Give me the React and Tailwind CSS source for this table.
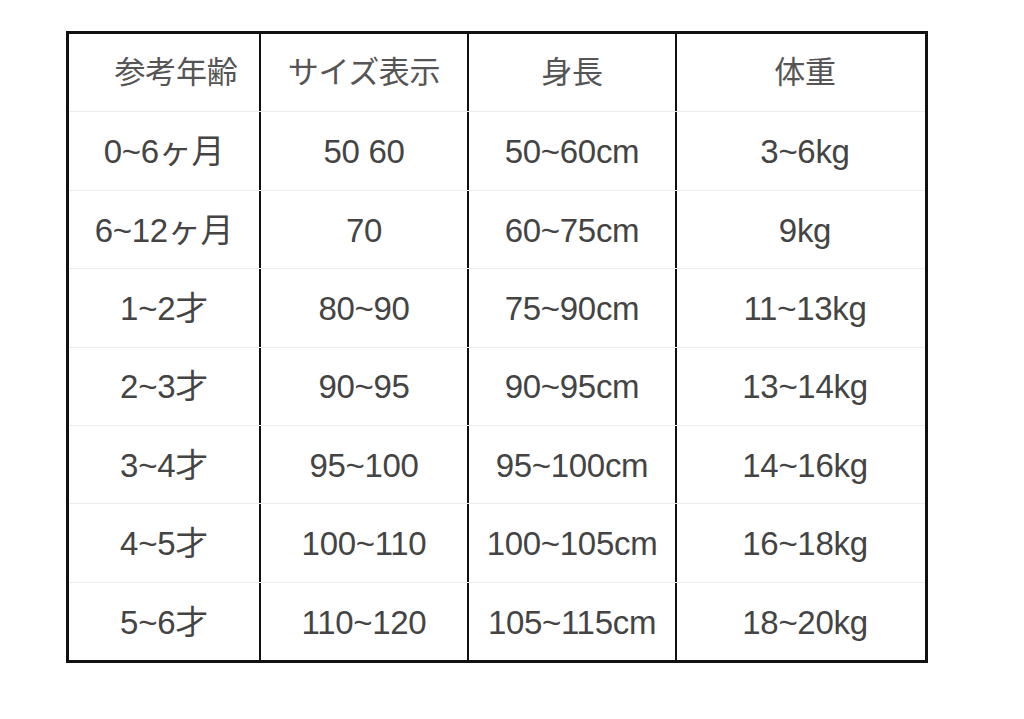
const rows = [
  ["0~6ヶ月", "50 60", "50~60cm", "3~6kg"],
  ["6~12ヶ月", "70", "60~75cm", "9kg"],
  ["1~2才", "80~90", "75~90cm", "11~13kg"],
  ["2~3才", "90~95", "90~95cm", "13~14kg"],
  ["3~4才", "95~100", "95~100cm", "14~16kg"],
  ["4~5才", "100~110", "100~105cm", "16~18kg"],
  ["5~6才", "110~120", "105~115cm", "18~20kg"],
];

const Row = ({ cells, header, first }) => (
  <div
    className={`flex flex-1 ${first ? "" : "border-t border-[#ebebeb]"} ${
      header ? "text-[#555] text-[31px]" : "text-[#444] text-[33px]"
    }`}
  >
    <div className={`w-[190px] pt-[2px] flex items-center justify-center ${header ? "pl-6" : ""}`}>
      {cells[0]}
    </div>
    <div className="w-[208px] pt-[2px] border-l-2 border-[#111] flex items-center justify-center">
      {cells[1]}
    </div>
    <div className="w-[208px] pt-[2px] border-l-2 border-[#111] flex items-center justify-center">
      {cells[2]}
    </div>
    <div className="w-[250px] pt-[2px] border-l-2 border-[#111] flex items-center justify-center pl-2">
      {cells[3]}
    </div>
  </div>
);

const App = () => {
  return (
    <div
      className="w-[1024px] h-[719px] bg-white pt-[31px] pl-[66px]"
      style={{ fontFamily: '"Liberation Sans", "Noto Sans CJK JP", sans-serif' }}
    >
      <div className="w-[862px] h-[632px] border-[3px] border-[#111] flex flex-col tracking-[-0.3px]">
        <Row cells={["参考年齢", "サイズ表示", "身長", "体重"]} header first />
        {rows.map((r) => (
          <Row key={r[0]} cells={r} />
        ))}
      </div>
    </div>
  );
};

export default App;
